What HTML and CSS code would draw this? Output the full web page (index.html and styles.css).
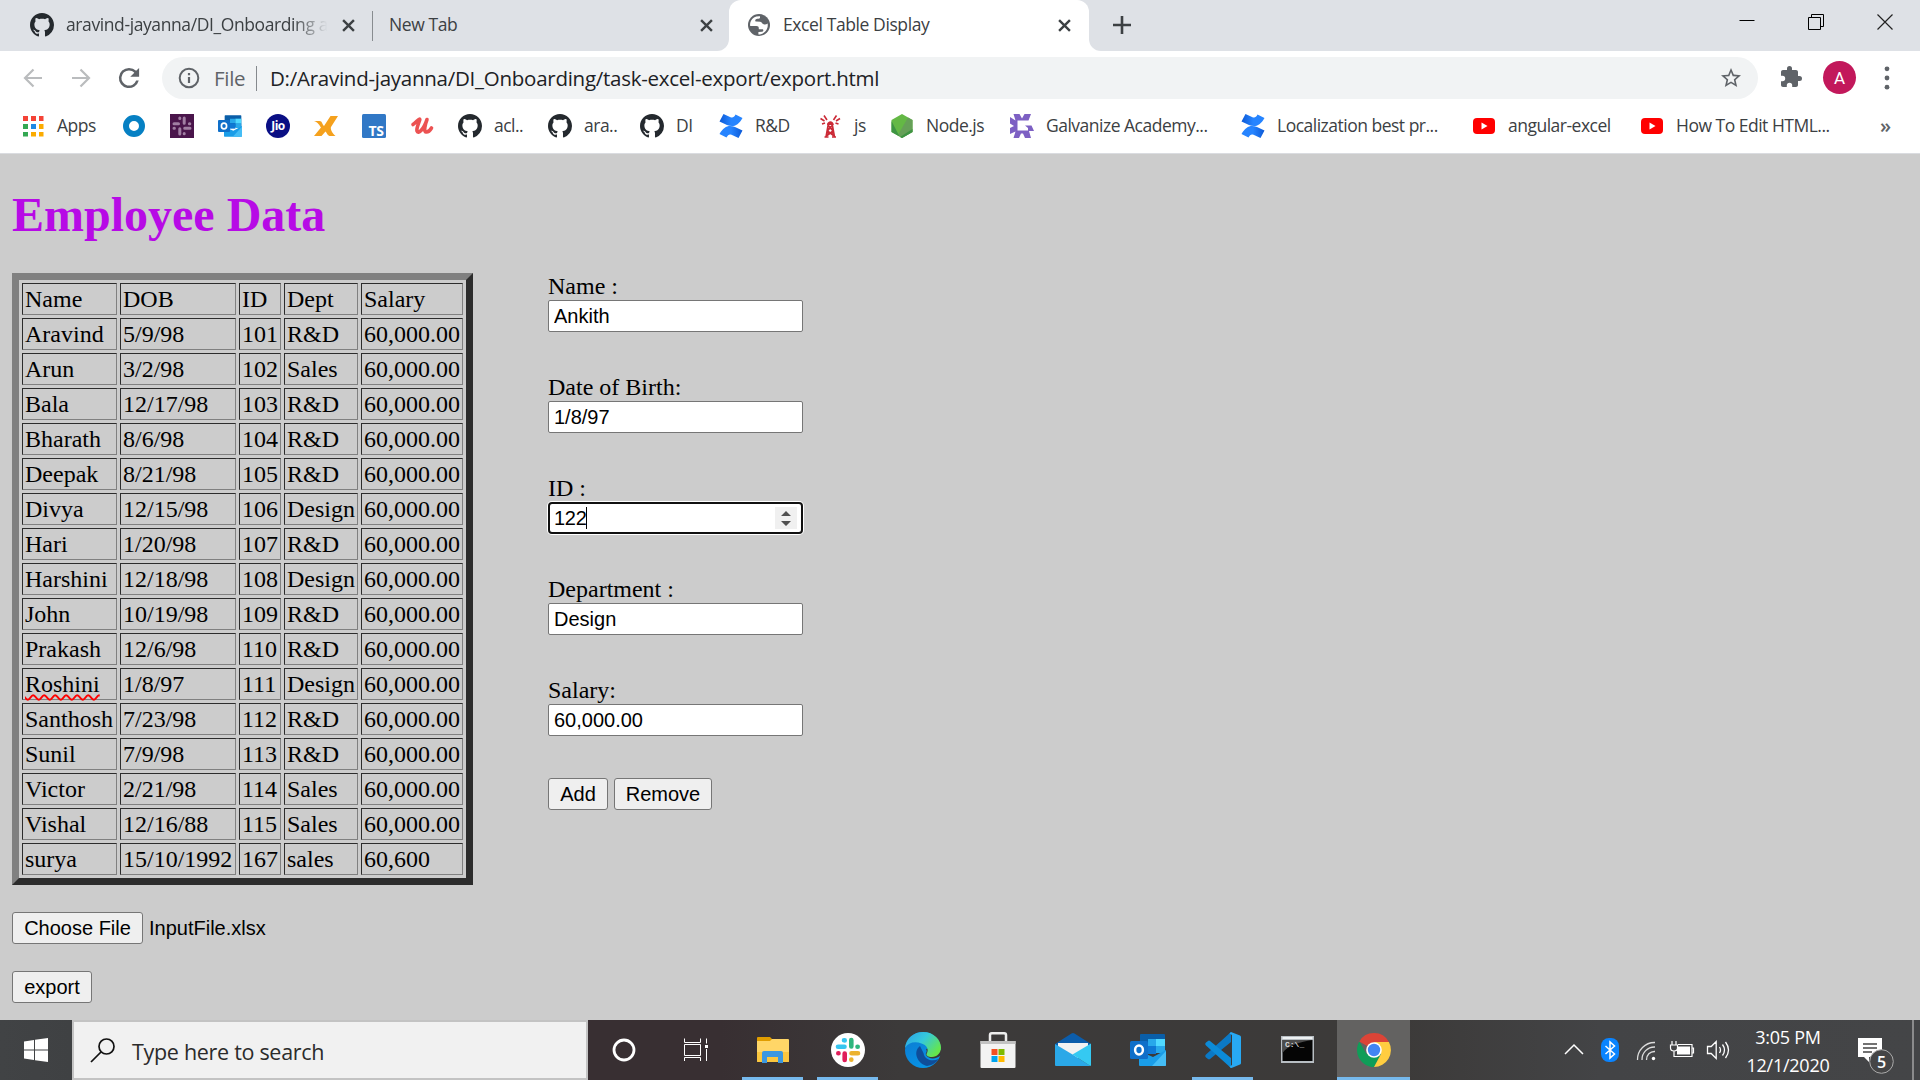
FILE: index.html
```html
<!DOCTYPE html>
<html lang="en">
<head>
<meta charset="utf-8">
<title>Excel Table Display</title>
<link rel="stylesheet" href="styles.css">
</head>
<body>
<svg class="defs" width="0" height="0" aria-hidden="true">
  <symbol id="github" viewBox="0 0 16 16"><path fill="#24292e" d="M8 0C3.58 0 0 3.58 0 8c0 3.54 2.29 6.53 5.47 7.59.4.07.55-.17.55-.38 0-.19-.01-.82-.01-1.49-2.01.37-2.53-.49-2.69-.94-.09-.23-.48-.94-.82-1.13-.28-.15-.68-.52-.01-.53.63-.01 1.08.58 1.23.82.72 1.21 1.87.87 2.33.66.07-.52.28-.87.51-1.07-1.78-.2-3.64-.89-3.64-3.95 0-.87.31-1.59.82-2.15-.08-.2-.36-1.02.08-2.12 0 0 .67-.21 2.2.82.64-.18 1.32-.27 2-.27s1.36.09 2 .27c1.53-1.04 2.2-.82 2.2-.82.44 1.1.16 1.92.08 2.12.51.56.82 1.27.82 2.15 0 3.07-1.87 3.75-3.65 3.95.29.25.54.73.54 1.48 0 1.07-.01 1.93-.01 2.2 0 .21.15.46.55.38A8.01 8.01 0 0 0 16 8c0-4.42-3.58-8-8-8z"/></symbol>
  <symbol id="confluence" viewBox="0 0 24 24"><defs><linearGradient id="cf" x1="0" x2="1"><stop offset="0" stop-color="#0c59d6"/><stop offset=".5" stop-color="#2684ff"/></linearGradient></defs><path id="fold" fill="url(#cf)" d="M4.500 0 .5 7.500 8 11c6 2.500 11 1 15.500-7L16.500.5C15 3.500 13.500 4 11.500 3.200z"/><path fill="url(#cf)" transform="rotate(180 12 12)" d="M4.500 0 .5 7.500 8 11c6 2.500 11 1 15.500-7L16.500.5C15 3.500 13.500 4 11.500 3.200z"/></symbol>
  <symbol id="youtube" viewBox="0 0 24 24"><rect x="1" y="4" width="22" height="16" rx="4" fill="#f00"/><path fill="#fff" d="M9.500 8.500v7l6-3.500z"/></symbol>
  <symbol id="outlook" viewBox="0 0 36 36"><path fill="#0a5ea8" d="M11 2h23a1 1 0 0 1 1 1v17H10V3a1 1 0 0 1 1-1z"/><path fill="#28a8ea" d="M18 7h8v7h-8zM26 14h9v7h-9z"/><path fill="#50d9ff" d="M26 7h9v7h-9z"/><path fill="#0f78d4" d="M18 14h8v8h-8z"/><path fill="#1a9de8" d="M9 19l14 6 13-7v15a1 1 0 0 1-1 1H10a1 1 0 0 1-1-1z"/><path fill="#45bdf5" d="M36 19v14a1 1 0 0 1-1 1H22z"/><rect y="9" width="18" height="18" rx="1.500" fill="#0f6fc9"/><ellipse cx="9" cy="18" rx="3.900" ry="4.400" fill="none" stroke="#fff" stroke-width="2.500"/></symbol>
  <symbol id="close" viewBox="0 0 12 12"><path d="M1 1l10 10M11 1L1 11" stroke="#3c4043" stroke-width="2.200"/></symbol>
</svg>

<header class="browser">
  <div class="tabs">
    <div class="tab tab-first">
      <svg class="fav"><use href="#github"/></svg>
      <span class="tab-title fade">aravind-jayanna/DI_Onboarding at</span>
      <svg class="x"><use href="#close"/></svg>
    </div>
    <div class="tab tab-second">
      <span class="tab-title">New Tab</span>
      <svg class="x"><use href="#close"/></svg>
    </div>
    <div class="tab tab-active">
      <svg class="fav" viewBox="0 0 24 24"><circle cx="12" cy="12" r="11" fill="#5f6368"/><path fill="#fff" d="M13 3.300c-4.500-.4-7.500 1.700-9.100 4.700-.8 1.600-1 3.200-.7 4.900l6.300.1c1.500 0 2.300.8 2.300 2.200v1h3.500c1.500.1 1.300 2.300-.1 2.500l-3.800.2v2.600c4.300-.1 7.600-2.600 8.900-6.500.5-1.500.6-3 .3-4.400-.9.7-1.900 1-3.200.9-2.300-.2-2.200-2.600-4.200-2.800l-4-.1c-1.200-.1-1.300-2-.2-2.400 1.700-.6 3.300-.1 4-1.100z"/></svg>
      <span class="tab-title">Excel Table Display</span>
      <svg class="x"><use href="#close"/></svg>
    </div>
    <svg class="newtab" viewBox="0 0 18 18"><path d="M9 0v18M0 9h18" stroke="#3c4043" stroke-width="2.600"/></svg>
    <div class="window-controls">
      <svg viewBox="0 0 16 16"><path d="M.5 6.500h15" stroke="#000" stroke-width="1"/></svg>
      <svg viewBox="0 0 16 16"><path d="M.5 3.500h12v12H.5zM3.500 3.500v-3h12v12h-3" fill="none" stroke="#000"/></svg>
      <svg viewBox="0 0 16 16"><path d="M.5.5l15 15M15.500.5l-15 15" stroke="#222" stroke-width="1.200"/></svg>
    </div>
  </div>

  <div class="toolbar">
    <svg class="nav" viewBox="0 0 24 24"><path d="M21 12H4M12.500 3.500 4 12l8.500 8.500" fill="none" stroke="#babcbe" stroke-width="2.200"/></svg>
    <svg class="nav" viewBox="0 0 24 24"><path d="M3 12h17M11.500 3.500 20 12l-8.500 8.500" fill="none" stroke="#babcbe" stroke-width="2.200"/></svg>
    <svg class="nav reload" viewBox="2.500 2.500 19 19"><path fill="#5f6368" d="M17.650 6.350A7.960 7.960 0 0 0 12 4a8 8 0 1 0 7.730 10h-2.080A6 6 0 1 1 12 6c1.660 0 3.140.69 4.220 1.780L13 11h7V4z"/></svg>
    <div class="omnibox">
      <svg class="info" viewBox="0 0 22 22"><circle cx="11" cy="11" r="9.300" fill="none" stroke="#5f6368" stroke-width="2"/><path d="M11 10v6M11 6v2.300" stroke="#5f6368" stroke-width="2.200"/></svg>
      <span class="scheme">File</span>
      <span class="url">D:/Aravind-jayanna/DI_Onboarding/task-excel-export/export.html</span>
      <svg class="star" viewBox="0 0 24 24"><path fill="#5f6368" d="M22 9.240l-7.190-.62L12 2 9.190 8.630 2 9.240l5.460 4.730L5.820 21 12 17.270 18.180 21l-1.630-7.030zM12 15.400l-3.760 2.270 1-4.280-3.320-2.880 4.380-.38L12 6.100l1.710 4.040 4.380.38-3.320 2.880 1 4.280z"/></svg>
    </div>
    <svg class="puzzle" viewBox="1 0 23 23"><path fill="#5f6368" d="M20.500 11H19V7c0-1.100-.9-2-2-2h-4V3.500a2.500 2.500 0 0 0-5 0V5H4c-1.100 0-2 .9-2 2v3.800h1.500a2.700 2.700 0 0 1 0 5.400H2V20c0 1.100.9 2 2 2h3.800v-1.500a2.700 2.700 0 0 1 5.400 0V22H17c1.100 0 2-.9 2-2v-4h1.500a2.500 2.500 0 0 0 0-5z"/></svg>
    <span class="avatar">A</span>
    <svg class="menu" viewBox="0 0 6 24"><g fill="#5f6368"><circle cx="3" cy="2.800" r="2.400"/><circle cx="3" cy="12" r="2.400"/><circle cx="3" cy="21.200" r="2.400"/></g></svg>
  </div>

  <nav class="bookmarks">
    <a class="bm w101"><svg viewBox="0 0 24 24"><path fill="#f44336" d="M2 2h5v5H2zM10 2h5v5h-5zM18 2h4.500v5H18z"/><path fill="#34a853" d="M2 10h5v5H2zM2 18h5v4.500H2z"/><path fill="#1e88e5" d="M10 10h5v5h-5z"/><path fill="#fbab00" d="M18 10h4.500v5H18zM10 18h5v4.500h-5zM18 18h4.500v4.500H18z"/></svg><span>Apps</span></a>
    <a class="bm w48"><svg viewBox="0 0 24 24"><circle cx="12" cy="12" r="8" fill="none" stroke="#0680c3" stroke-width="6"/></svg></a>
    <a class="bm w48"><svg viewBox="0 0 24 24"><rect width="24" height="24" fill="#4a154b"/><g stroke="#a17fa3" stroke-width="3" stroke-linecap="round"><path d="M4 9.800h4.500M9.800 4v.4M14.200 4v5.300M19.800 9.800h-.4M14.700 14.200h5.300M14.200 19.800v-.4M9.800 14.700V20M4 14.200h.4"/></g></svg></a>
    <a class="bm w48"><svg><use href="#outlook"/></svg></a>
    <a class="bm w48"><svg viewBox="0 0 24 24"><circle cx="12" cy="12" r="12" fill="#0a0f84"/><text x="12" y="16" text-anchor="middle" class="jio">Jio</text></svg></a>
    <a class="bm w48"><svg viewBox="0 0 24 24"><path fill="#f5a11d" d="M0 7h5.500c3 0 2.500 3.500 4.500 5L16.500 2H24l-7 11c-.8 1.500.8 6 4.500 9h-6c-2-.5-2.500-3-4-4.500L7.500 22H0l7-8.500C5.500 11.500 4 8 0 7z"/></svg></a>
    <a class="bm w48"><svg viewBox="0 0 24 24"><rect width="24" height="24" rx="1.500" fill="#3178c6"/><text x="14" y="21.500" text-anchor="middle" class="ts">TS</text></svg></a>
    <a class="bm w48"><svg viewBox="0 0 24 24"><path fill="none" stroke="#ec5252" stroke-width="3.600" stroke-linecap="round" stroke-linejoin="round" d="M3 10.500C6 8.500 8.500 5 9.500 5c1.500 0-3.500 8-2.500 12 1 3.500 6.500-1 10-11.500-2 5-3.500 12-1 12.500 2 .3 4-1.500 5.500-4"/></svg></a>
    <a class="bm w90"><svg><use href="#github"/></svg><span>acl..</span></a>
    <a class="bm w92"><svg><use href="#github"/></svg><span>ara..</span></a>
    <a class="bm w79"><svg><use href="#github"/></svg><span>DI</span></a>
    <a class="bm w99"><svg><use href="#confluence"/></svg><span>R&amp;D</span></a>
    <a class="bm w72"><svg viewBox="0 0 24 24"><g fill="none" stroke="#cb2a36" stroke-width="1.600"><path d="M10.500 9 8 23M14 9l2.500 14M9 14.500h6.500M8.500 19h7.500M10 11l5 6-6 4.500M14.500 11l-5 6 6 4.500M6.500 23h4M14 23h4"/><path d="M6 1.500 9 6M18.500 1.500 15.500 6M2.500 4.500 6.500 7M22 4.500 18 7M4 10l3-1M20.500 10l-3-1"/></g><path fill="#cb2a36" d="M9 11c.3-5 6.500-5 6.800 0z"/></svg><span>js</span></a>
    <a class="bm w120"><svg viewBox="0 0 24 24"><path fill="#64b845" d="M12 0l10.500 6v12L12 24 1.500 18V6z"/><path fill="#66a058" d="M18 3.500l4.500 2.500v12L12 24 8 21z"/><path fill="#3e9443" d="M1.500 7 9.500 22.500 1.500 18zM12 24l10.500-6v-3L10 23z"/></svg><span>Node.js</span></a>
    <a class="bm w231"><svg viewBox="0 0 24 24"><path fill="#7d60c3" d="M3.500 0h6L12 4.500 14.500 0H21l-2.500 6.500H7.500v10H18V14l-3-2.500h6.500L24 17h-5l2 7h-6l-2-4.500h-2L9 24H3.500l2-6.500L0 20v-6l4-2-4-2.500V3l5.500 3.500z"/></svg><span>Galvanize Academy...</span></a>
    <a class="bm w231"><svg><use href="#confluence"/></svg><span>Localization best pr...</span></a>
    <a class="bm w168"><svg><use href="#youtube"/></svg><span>angular-excel</span></a>
    <a class="bm w240"><svg><use href="#youtube"/></svg><span>How To Edit HTML...</span></a>
    <span class="more">»</span>
  </nav>
</header>

<main class="page">
  <h1>Employee Data</h1>
  <div class="columns">
    <section class="left">
      <table>
        <colgroup><col class="c-name"><col class="c-dob"><col class="c-id"><col class="c-dept"><col class="c-sal"></colgroup>
        <tbody>
        <tr><td>Name</td><td>DOB</td><td>ID</td><td>Dept</td><td>Salary</td></tr>
        <tr><td>Aravind</td><td>5/9/98</td><td>101</td><td>R&amp;D</td><td>60,000.00</td></tr>
        <tr><td>Arun</td><td>3/2/98</td><td>102</td><td>Sales</td><td>60,000.00</td></tr>
        <tr><td>Bala</td><td>12/17/98</td><td>103</td><td>R&amp;D</td><td>60,000.00</td></tr>
        <tr><td>Bharath</td><td>8/6/98</td><td>104</td><td>R&amp;D</td><td>60,000.00</td></tr>
        <tr><td>Deepak</td><td>8/21/98</td><td>105</td><td>R&amp;D</td><td>60,000.00</td></tr>
        <tr><td>Divya</td><td>12/15/98</td><td>106</td><td>Design</td><td>60,000.00</td></tr>
        <tr><td>Hari</td><td>1/20/98</td><td>107</td><td>R&amp;D</td><td>60,000.00</td></tr>
        <tr><td>Harshini</td><td>12/18/98</td><td>108</td><td>Design</td><td>60,000.00</td></tr>
        <tr><td>John</td><td>10/19/98</td><td>109</td><td>R&amp;D</td><td>60,000.00</td></tr>
        <tr><td>Prakash</td><td>12/6/98</td><td>110</td><td>R&amp;D</td><td>60,000.00</td></tr>
        <tr><td><span class="misspelled">Roshini</span></td><td>1/8/97</td><td>111</td><td>Design</td><td>60,000.00</td></tr>
        <tr><td>Santhosh</td><td>7/23/98</td><td>112</td><td>R&amp;D</td><td>60,000.00</td></tr>
        <tr><td>Sunil</td><td>7/9/98</td><td>113</td><td>R&amp;D</td><td>60,000.00</td></tr>
        <tr><td>Victor</td><td>2/21/98</td><td>114</td><td>Sales</td><td>60,000.00</td></tr>
        <tr><td>Vishal</td><td>12/16/88</td><td>115</td><td>Sales</td><td>60,000.00</td></tr>
        <tr><td>surya</td><td>15/10/1992</td><td>167</td><td>sales</td><td>60,600</td></tr>
        </tbody>
      </table>
      <div class="file"><button class="btn choose">Choose File</button><span>InputFile.xlsx</span></div>
      <button class="btn export">export</button>
    </section>
    <section class="form">
      <label>Name :<input type="text" value="Ankith"></label>
      <label>Date of Birth:<input type="text" value="1/8/97"></label>
      <label>ID :
        <span class="number"><span class="value">122</span><svg class="spin" viewBox="0 0 22 22"><path fill="#505050" d="M6 9l5-5 5 5zM6 14h10l-5 5z"/></svg></span>
      </label>
      <label>Department :<input type="text" value="Design"></label>
      <label>Salary:<input type="text" value="60,000.00"></label>
      <div class="actions"><button class="btn add">Add</button><button class="btn remove">Remove</button></div>
    </section>
  </div>
</main>

<footer class="taskbar">
  <div class="start"><svg width="24" height="24" viewBox="0 0 24 24"><path fill="#fff" d="M0 3.400 10 2v9.500H0zM11 1.850 24 0v11.500H11zM0 12.500h10V22L0 20.600zM11 12.500h13V24l-13-1.850z"/></svg></div>
  <div class="search"><svg width="25" height="25" viewBox="0 0 25 25"><circle cx="16.500" cy="8.500" r="7.500" fill="none" stroke="#111" stroke-width="1.700"/><path d="M11 14 1 24" stroke="#111" stroke-width="1.700"/></svg><span>Type here to search</span></div>
  <div class="slot"><svg width="24" height="24" viewBox="0 0 24 24"><circle cx="12" cy="12" r="10" fill="none" stroke="#fff" stroke-width="2.800"/></svg></div>
  <div class="slot"><svg width="24" height="24" viewBox="0 0 24 24"><path fill="none" stroke="#fff" d="M.5.500v4h16v-4M.5 6.500h16v11H.5zM.5 23v-3.500h16V23M22.500.5v5M22.500 11v12"/><path fill="#fff" d="M21 7h3v3h-3z"/></svg></div>
  <div class="app first running"><svg width="36" height="36" viewBox="0 0 36 36"><path fill="#e09d00" d="M2 6a1 1 0 0 1 1-1h12l2 2v4H2z"/><path fill="#ffd667" d="M2 9h13l2-2h16a1 1 0 0 1 1 1v21a1 1 0 0 1-1 1H3a1 1 0 0 1-1-1z"/><path fill="#fbc63e" d="M2 20h32v9a1 1 0 0 1-1 1H3a1 1 0 0 1-1-1z"/><path fill="#3b97e0" d="M7 31V21a2 2 0 0 1 2-2h17a2 2 0 0 1 2 2v10h-5v-6H12v6z"/></svg></div>
  <div class="app running"><svg width="36" height="36" viewBox="0 0 36 36"><circle cx="18" cy="18" r="17" fill="#fff"/><g stroke-width="4.600" stroke-linecap="round"><path stroke="#36c5f0" d="M8 14.700h6.500M14.700 8.300v.2M14 8.300h.7"/><path stroke="#2eb67d" d="M21.300 8v6.500M27.700 14.700h-.2"/><path stroke="#ecb22e" d="M21.500 21.300H28M21.300 27.700v-.2"/><path stroke="#e01e5a" d="M14.700 21.500V28M8.300 21.300h.2"/></g></svg></div>
  <div class="app"><svg width="36" height="36" viewBox="0 0 36 36"><defs><linearGradient id="e1" x1="0" y1="0" x2="1" y2=".6"><stop offset="0" stop-color="#2b9fe6"/><stop offset=".5" stop-color="#35c8dc"/><stop offset="1" stop-color="#65e64c"/></linearGradient><linearGradient id="e2" x1="0" y1="0" x2=".6" y2="1"><stop offset="0" stop-color="#0d78cf"/><stop offset="1" stop-color="#0794e6"/></linearGradient></defs><circle cx="18" cy="18" r="18" fill="url(#e2)"/><path fill="#0f4d99" d="M15 14c-8 6-2 18 7 20 6-1 10-4 11.500-7-6 3-14 1-15-6z"/><path fill="#3a3838" d="M21 17c2 3-1 4 0 6 3 5 11 4 15 0V18l-7-3z"/><path fill="url(#e1)" d="M0 16C1 6 9 0 18 0c11 0 18 8 18 15.500C36 21 32 25 27 25c-4 0-6-1.500-5.500-3 3-5 0-9-5-10.500C10 9 3 10.500 0 16z"/></svg></div>
  <div class="app"><svg width="36" height="36" viewBox="0 0 36 36"><path fill="none" stroke="#eee" stroke-width="2.500" d="M10 12V3q0-1.700 1.700-1.700h12.600Q26 1.300 26 3v9"/><path fill="#f3f3f3" d="M.5 9h35v26a1 1 0 0 1-1 1h-33a1 1 0 0 1-1-1z"/><path fill="#c2c2c2" d="M.5 9h35v3H.5z"/><path fill="#f25022" d="M11.500 17h6v6h-6z"/><path fill="#7fba00" d="M18.500 17h6v6h-6z"/><path fill="#00a4ef" d="M11.500 24h6v6h-6z"/><path fill="#ffb900" d="M18.500 24h6v6h-6z"/></svg></div>
  <div class="app"><svg width="36" height="36" viewBox="0 0 36 36"><path fill="#0c5dab" d="M0 12 16.500 1.500q1.500-1 3 0L36 12v4H0z"/><path fill="#f2f2f2" d="M3 11h30v10L18 29 3 19z"/><path fill="#2aa8e8" d="M0 12v21a1 1 0 0 0 1 1h34.500L17.500 22.500z"/><path fill="#35c9f2" d="M36 11.500v21.500a1 1 0 0 1-.6.9L17.500 22.500z"/></svg></div>
  <div class="app"><svg width="36" height="36"><use href="#outlook"/></svg></div>
  <div class="app running"><svg width="36" height="36" viewBox="0 0 36 36"><path fill="#0b79c6" d="M1 25.500q-1.500-1.500 0-3L26 0v10L5 27q-1 .8-2 0z"/><path fill="#0c8bd8" d="M1 10.500q-1.500 1.500 0 3L26 36V26L5 9q-1-.8-2 0z"/><path fill="#28a9f3" d="M26 0l9 3.500q1 .5 1 1.500v26q0 1-1 1.500L26.500 36q-1 0-2-1.500L27 33V3l-2.500-1.500z"/></svg></div>
  <div class="app"><svg width="36" height="36" viewBox="0 0 36 36"><path fill="#b8bec3" d="M1 4h33v27H1z"/><path fill="#eef1f3" d="M2.500 5h30v2h-30z"/><path fill="#050505" d="M2.500 8h30v21h-30z"/><path fill="#4b4b4b" d="M2.500 8h30C20 10 8 13 2.500 21z"/><text x="5" y="15" class="prompt">C:\_</text></svg></div>
  <div class="app current"><svg width="36" height="36" viewBox="0 0 36 36"><path fill="#db4437" d="M3.300 9.500A17 17 0 0 1 32.900 10H18v8z"/><path fill="#0f9d58" d="M3.300 9.500A17 17 0 0 0 18 35l7-13-7-4-7.400 4z"/><path fill="#ffcd40" d="M18 35a17 17 0 0 0 14.900-25H18l7 12z"/><circle cx="18" cy="18" r="7.800" fill="#fff"/><circle cx="18" cy="18" r="6.200" fill="#4285f4"/></svg></div>
  <div class="tray">
    <div class="ti"><svg width="20" height="24" viewBox="0 0 20 24"><path d="M1 16l9-9 9 9" fill="none" stroke="#fff" stroke-width="1.500"/></svg></div>
    <div class="ti"><svg width="18" height="24" viewBox="0 0 18 24"><rect width="18" height="24" rx="8" fill="#0a84ff"/><path d="M4.500 8l9 8-4.500 4V4l4.500 4-9 8" fill="none" stroke="#fff" stroke-width="1.500"/></svg></div>
    <div class="ti"><svg width="20" height="24" viewBox="0 0 20 24"><g fill="none" stroke="#ddd" stroke-width="1.300"><path d="M1.500 22A17 17 0 0 1 19 4.500M6 22A12.500 12.500 0 0 1 19 9M10.500 22A8 8 0 0 1 19 13.500"/></g><circle cx="17.500" cy="20.500" r="1.700" fill="#fff"/></svg></div>
    <div class="ti"><svg width="26" height="24" viewBox="0 0 26 24"><path fill="#fff" d="M8 8.500h13v8H8z"/><path fill="none" stroke="#fff" stroke-width="1.200" d="M9 6.500h14v12H5v-5M23 10h1.500v5H23M3 3v4M7 3v4M1.500 7h7v3q0 3-3.500 3t-3.500-3zM5 13v5"/></svg></div>
    <div class="ti"><svg width="24" height="24" viewBox="0 0 24 24"><path fill="none" stroke="#fff" stroke-width="1.300" d="M1.500 8.500h3.700l5-5v17l-5-5H1.500zM13.500 9q2 3 0 6M16.500 6.500q4 5.500 0 11M19.500 4q6 8 0 16"/></svg></div>
    <div class="clock"><span>3:05 PM</span><span>12/1/2020</span></div>
    <div class="notice"><svg width="36" height="38" viewBox="0 0 36 38"><path fill="#fff" d="M0 1h24v19H11v5l-5-5H0z"/><path d="M5 7h14M5 11h14M5 15h9" stroke="#444" stroke-width="1.300"/><circle cx="23.500" cy="24.500" r="11.800" fill="#454546" stroke="#aaa"/><text x="23.500" y="30.500" text-anchor="middle" class="count">5</text></svg></div>
    <div class="desktop"></div>
  </div>
</footer>
</body>
</html>
```
FILE: styles.css
```css
* { box-sizing: border-box; }
body {
  margin: 0;
  width: 1920px;
  height: 1080px;
  overflow: hidden;
  display: flex;
  flex-direction: column;
  background: #ccc;
  color: #000;
  font-family: "Open Sans", "Noto Sans", sans-serif;
}
svg { display: block; flex: none; }
.defs { position: absolute; }

/* Browser chrome */
.browser { flex: none; height: 154px; background: #fff; border-bottom: 1px solid #dadce0; font-size: 17.5px; color: #3c4043; }
.tabs { display: flex; height: 51px; background: linear-gradient(#fff, #fff) 717px bottom / 384px 12px no-repeat, #dee1e6; }
.tab { display: flex; align-items: center; height: 51px; }
.tab-first { width: 373px; padding: 0 18px 1px 30px; background: linear-gradient(#888c90, #888c90) right center / 1px 30px no-repeat; }
.tab-second { width: 356px; padding: 0 16px 1px 16px; border-bottom-right-radius: 12px; background: #dee1e6; }
.tab-active { width: 360px; padding: 0 18px 1px 18px; background: #fff; border-radius: 12px 12px 0 0; }
.fav { width: 24px; height: 24px; margin-right: 12px; }
.tab-title { flex: 1; margin-top: -2px; white-space: nowrap; overflow: hidden; letter-spacing: -.4px; }
.tab-first .tab-title { margin-right: 12px; }
.fade { -webkit-mask-image: linear-gradient(90deg, #000 86%, transparent 99%); mask-image: linear-gradient(90deg, #000 86%, transparent 99%); }
.x { width: 13px; height: 13px; }
.newtab { width: 42px; height: 51px; padding: 16px 0 17px 24px; border-bottom-left-radius: 12px; background: #dee1e6; }
.window-controls { display: flex; gap: 53px; margin: 14px 27px 0 auto; }
.window-controls svg { width: 16px; height: 16px; }

.toolbar { display: flex; align-items: center; height: 54px; padding: 0 30px 0 21px; }
.nav { width: 24px; height: 24px; margin-right: 24px; }
.reload { width: 24px; margin: 0 21px 0 0; }
.omnibox { display: flex; align-items: center; width: 1597px; height: 42px; padding: 0 15px 0 16px; border-radius: 21px; background: #f1f3f4; font-size: 20.5px; }
.info { width: 22px; height: 22px; margin-right: 14px; }
.scheme { width: 43px; height: 25px; line-height: 24px; color: #5f6368; border-right: 1px solid #85898d; letter-spacing: -.3px; }
.url { flex: 1; margin-left: 13px; color: #202124; letter-spacing: -.26px; white-space: nowrap; }
.star { width: 24px; height: 24px; }
.puzzle { width: 23px; height: 23px; margin: -3px 0 0 22px; }
.avatar { width: 33px; height: 33px; margin: -1px 0 0 20px; border-radius: 50%; background: #c2185b; color: #fff; font: 17px/34px Roboto, sans-serif; text-align: center; }
.menu { width: 6px; height: 24px; margin-left: 28px; }

.bookmarks { display: flex; align-items: center; height: 42px; padding-left: 21px; }
.bm { display: flex; flex: none; align-items: center; gap: 12px; white-space: nowrap; letter-spacing: -.5px; }
.bm span { margin-top: -2px; }
.bm svg { width: 24px; height: 24px; }
.w48 { width: 48px; }
.w72 { width: 72px; }
.w79 { width: 79px; }
.w90 { width: 90px; }
.w92 { width: 92px; }
.w99 { width: 99px; }
.w101 { width: 101px; }
.w120 { width: 120px; }
.w168 { width: 168px; }
.w231 { width: 231px; }
.w240 { width: 240px; }
.jio { font: bold 12px "Open Sans", sans-serif; fill: #fff; }
.ts { font: bold 14px "Open Sans", sans-serif; fill: #fff; }
.more { margin-top: -2px; font-size: 20px; font-weight: 600; color: #5f6368; }

/* Employee page, shown at 150% zoom */
.page { flex: 1; padding: 0 12px; font: 24px/27px "Liberation Serif", "Times New Roman", serif; }
h1 { margin: 33px 0 31px; font-size: 48px; line-height: 55px; color: #b70ae6; }
.columns { display: flex; gap: 74px; }
.left { width: 461px; }
table {
  table-layout: fixed;
  width: 461px;
  border: 7px solid;
  border-color: #808080 #2c2c2c #2c2c2c #808080;
  border-collapse: separate;
  border-spacing: 3px;
}
td { height: 32px; padding: 0 0 0 2px; border: 1px solid; border-color: #2c2c2c #808080 #808080 #2c2c2c; line-height: 30px; white-space: nowrap; }
.c-name { width: 95px; }
.c-dob { width: 116px; }
.c-id { width: 42px; }
.c-dept { width: 74px; }
.c-sal { width: 102px; }
.misspelled { text-decoration: underline wavy #f00 1.5px; text-underline-offset: 2px; text-decoration-skip-ink: none; }
.btn { height: 32px; padding: 0; border: 1px solid #767676; border-radius: 3px; background: #efefef; color: #000; font: 20px "Liberation Sans", Arial, sans-serif; }
.file { display: flex; align-items: center; gap: 6px; margin: 27px 0; font: 20px "Liberation Sans", Arial, sans-serif; }
.choose { width: 131px; }
.export { display: block; width: 80px; }
.form { width: 256px; padding-left: 1px; }
.form label { display: block; height: 101px; }
.form input, .number { display: flex; width: 255px; height: 32px; padding: 0 5px; border: 1px solid #767676; border-radius: 2px; background: #fff; color: #000; font: 20px "Liberation Sans", Arial, sans-serif; }
.form .number { align-items: center; justify-content: space-between; padding: 0 4px; border: 2px solid #101010; border-radius: 4px; box-shadow: 0 0 0 1px #fff; }
.value { height: 22px; line-height: 22px; border-right: 1px solid #000; letter-spacing: -.3px; }
.spin { width: 22px; height: 22px; background: #f0f0f0; }
.actions { display: flex; gap: 6px; }
.add { width: 60px; }
.remove { width: 98px; }

/* Taskbar */
.taskbar { flex: none; display: flex; height: 60px; color: #fff; background: linear-gradient(90deg, #414345 0, #3f4143 72px, #382f32 588px, #382f32 720px, #3c3a3a 900px, #3c3a39 1400px, #434446 1600px, #444547 100%); }
.start, .slot { display: flex; align-items: center; justify-content: center; width: 72px; }
.search { display: flex; align-items: center; gap: 17px; width: 516px; padding-left: 16px; border: 2px solid #c3c3c3; background: #f1f1f1; color: #2b2b2b; font-size: 21.5px; letter-spacing: -.02px; }
.search span { margin-top: 2px; letter-spacing: -.3px; }
.app { display: flex; align-items: center; justify-content: center; width: 75px; }
.first { margin-left: 3px; }
.running { background: linear-gradient(#76b9ed, #76b9ed) center bottom / 61px 3px no-repeat; }
.current { width: 73px; margin-left: 2px; background: linear-gradient(#76b9ed, #76b9ed) center bottom / 100% 3px no-repeat #636261; }
.prompt { font: bold 8px "Liberation Mono", monospace; fill: #ddd; }
.tray { display: flex; margin-left: auto; width: 364px; }
.ti { display: flex; align-items: center; justify-content: center; width: 36px; }
.clock { display: flex; flex-direction: column; align-items: center; width: 104px; padding-top: 3px; font-size: 18px; line-height: 28px; letter-spacing: -.25px; }
.notice { width: 72px; padding: 17px 0 0 18px; }
.count { font: 600 16px "Open Sans", sans-serif; fill: #fff; }
.desktop { width: 2px; height: 60px; background: #8b8b8c; }
```
